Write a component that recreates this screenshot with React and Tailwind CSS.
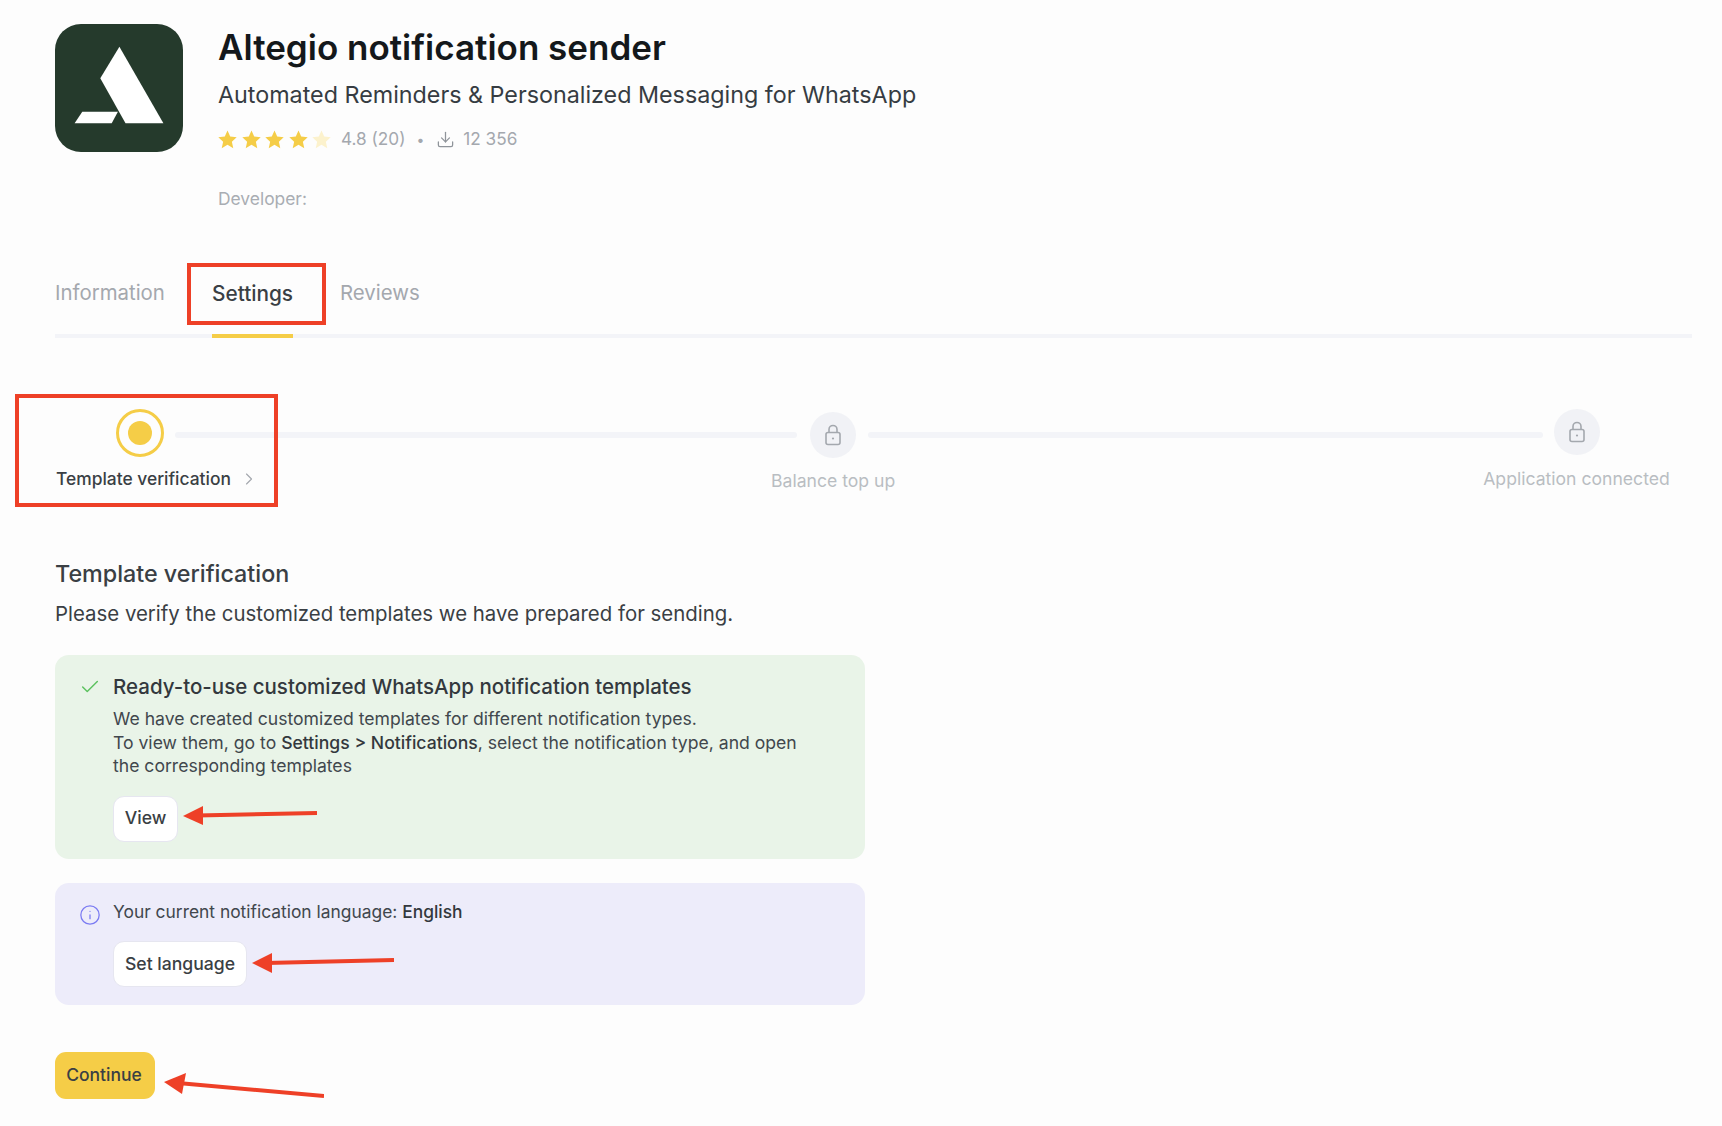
import React from "react";
import { Download, ChevronRight, Check, Info } from "lucide-react";

const StarIcon = ({ pale }) => (
  <svg width="21" height="21" viewBox="0 0 24 24" className={pale ? "text-[#fcf2cd]" : "text-[#f5cd47]"} fill="currentColor">
    <path d="M12 1.8l3.1 6.9 7.4.8-5.5 5 1.6 7.4L12 18.1 5.4 21.9 7 14.5l-5.5-5 7.4-.8z" />
  </svg>
);

const LockIcon = () => (
  <svg width="20" height="24" viewBox="0 0 20 24" fill="none" stroke="#a4a8ae" strokeWidth="1.6">
    <rect x="3" y="9.5" width="14" height="12" rx="2" />
    <path d="M6 9.5V6.5a4 4 0 0 1 8 0v3" />
    <circle cx="10" cy="15.5" r="1.1" fill="#a4a8ae" stroke="none" />
  </svg>
);

const LockCircle = ({ className }) => (
  <div className={`w-[46px] h-[46px] rounded-full bg-[#f1f2f6] flex items-center justify-center shrink-0 ${className}`}>
    <LockIcon />
  </div>
);

const Line = ({ className }) => <div className={`h-[6px] rounded-full bg-[#f3f4f8] ${className}`} />;

const Arrow = ({ className, width, height, d, tip }) => (
  <svg className={`absolute pointer-events-none ${className}`} width={width} height={height} viewBox={`0 0 ${width} ${height}`} fill="none">
    <path d={d} stroke="#ee4027" strokeWidth="4" />
    <polygon points={tip} fill="#ee4027" />
  </svg>
);

const WhiteButton = ({ children, className }) => (
  <button className={`h-[46px] rounded-[11px] bg-white border border-[#e6e6f0] text-[17.6px] font-medium text-[#3a3f44] flex items-center justify-center ${className}`}>
    {children}
  </button>
);

export default function App() {
  return (
    <div className="relative h-[1126px] w-full overflow-hidden bg-[#fdfdfd] text-[#33383d] font-['Inter',sans-serif] pl-[55px]">
      {/* Header */}
      <div className="flex pt-[24px] h-[256px]">
        <div className="w-[128px] h-[128px] rounded-[26px] bg-[#253a2c] shrink-0">
          <svg width="128" height="128" viewBox="0 0 128 128" fill="#ffffff">
            <polygon points="64.4,22.7 108.4,99.3 70.5,99.3 45.3,54.3" />
            <polygon points="27.3,87.7 62.9,87.7 56.7,99.3 19.6,99.3" />
          </svg>
        </div>
        <div className="ml-[35px]">
          <h1 className="text-[35px] leading-[46px] font-semibold text-[#14181b]">Altegio notification sender</h1>
          <p className="text-[23.3px] leading-[30px] mt-[10px] text-[#363c42]">Automated Reminders &amp; Personalized Messaging for WhatsApp</p>
          <div className="flex items-center mt-[17px] h-[24px] text-[17.2px] text-[#a4a8ae]">
            <div className="flex gap-[2.5px] -ml-[1px]">
              <StarIcon /><StarIcon /><StarIcon /><StarIcon /><StarIcon pale />
            </div>
            <span className="ml-[9px]">4.8 (20)</span>
            <span className="ml-[11px] text-[14px]">•</span>
            <Download size={19} strokeWidth={1.6} className="ml-[12px] text-[#8f949a]" />
            <span className="ml-[8px]">12 356</span>
          </div>
          <div className="mt-[36px] text-[17.4px] leading-[24px] text-[#a9adb3]">Developer:</div>
        </div>
      </div>

      {/* Tabs */}
      <div className="flex h-[82px] w-[1637px] border-b-[4px] border-[#f3f4f8] text-[20.4px] text-[#a4a8ae]">
        <div className="pt-[22px] w-[157px]">Information</div>
        <div className="relative pt-[22px] w-[128px] text-[#3a3f44] font-medium text-[20.8px]">
          Settings
          <div className="absolute left-0 bottom-[-4px] h-[4px] w-[81px] bg-[#f5cd47]" />
        </div>
        <div className="pt-[22px]">Reviews</div>
      </div>

      {/* Stepper */}
      <div className="flex items-center mt-[71px] ml-[61px] h-[52px]">
        <div className="w-[48px] h-[48px] rounded-full border-[3px] border-[#f5cd47] flex items-center justify-center shrink-0 mb-[5px]">
          <div className="w-[24px] h-[24px] rounded-full bg-[#f5cd47]" />
        </div>
        <Line className="w-[622px] ml-[11px]" />
        <LockCircle className="ml-[13px]" />
        <Line className="w-[675px] ml-[12px]" />
        <LockCircle className="ml-[11px] mb-[6px]" />
      </div>
      <div className="flex items-start h-[36px] mt-[6px] text-[17.6px] leading-[24px] text-[#b9bdc2]">
        <div className="flex items-center w-[220px] text-[#3a3f44] font-medium text-[17.4px]">
          <span className="ml-[1px]">Template verification</span>
          <ChevronRight size={20} strokeWidth={1.4} className="ml-[8px] text-[#a4a8ae]" />
        </div>
        <span className="ml-[496px] mt-[2px]">Balance top up</span>
        <span className="ml-[588px]">Application connected</span>
      </div>

      {/* Section */}
      <h2 className="mt-[56px] text-[23.3px] leading-[30px] font-medium text-[#3a3f44]">Template verification</h2>
      <p className="mt-[11px] text-[20.4px] leading-[28px] text-[#3a3f44]">Please verify the customized templates we have prepared for sending.</p>

      <div className="mt-[27px] w-[810px] h-[204px] rounded-[14px] bg-[#e9f4e8] pl-[58px] pt-[18px] relative">
        <Check size={22} strokeWidth={1.6} className="absolute left-[24px] top-[21px] text-[#5cc25f]" />
        <h3 className="text-[20.5px] leading-[28px] font-medium text-[#33383d]">Ready-to-use customized WhatsApp notification templates</h3>
        <p className="mt-[6px] text-[17.6px] leading-[23.5px] text-[#41474d] w-[690px]">
          We have created customized templates for different notification types.<br />
          To view them, go to <span className="font-medium text-[#33383d]">Settings &gt; Notifications</span>, select the notification type, and open the corresponding templates
        </p>
        <WhiteButton className="w-[65px] mt-[18px]">View</WhiteButton>
      </div>

      <div className="mt-[24px] w-[810px] h-[122px] rounded-[14px] bg-[#edecfa] pl-[58px] pt-[16px] relative">
        <Info size={22} strokeWidth={1.4} className="absolute left-[24px] top-[21px] text-[#7b7bf2]" />
        <p className="text-[17.4px] leading-[26px] text-[#41474d]">Your current notification language: <span className="font-medium text-[#33383d]">English</span></p>
        <WhiteButton className="w-[134px] mt-[16px]">Set language</WhiteButton>
      </div>

      <button className="mt-[47px] w-[100px] h-[47px] rounded-[11px] bg-[#f5cd47] text-[17.5px] font-medium text-[#3a3f44] pr-[2px]">Continue</button>

      {/* Annotations */}
      <div className="absolute left-[187px] top-[263px] w-[139px] h-[62px] border-[4px] border-[#ee4027]" />
      <div className="absolute left-[15px] top-[394px] w-[263px] h-[113px] border-[4px] border-[#ee4027]" />
      <Arrow className="left-[183px] top-[802px]" width={134} height={26} d="M14 13.5 L134 11" tip="0,14 20,4 20,23" />
      <Arrow className="left-[252px] top-[950px]" width={142} height={26} d="M14 13 L142 10" tip="0,13 20,3 20,23" />
      <Arrow className="left-[164px] top-[1072px]" width={160} height={28} d="M14 11 L160 24" tip="0,10 22,1 18,22" />
    </div>
  );
}
